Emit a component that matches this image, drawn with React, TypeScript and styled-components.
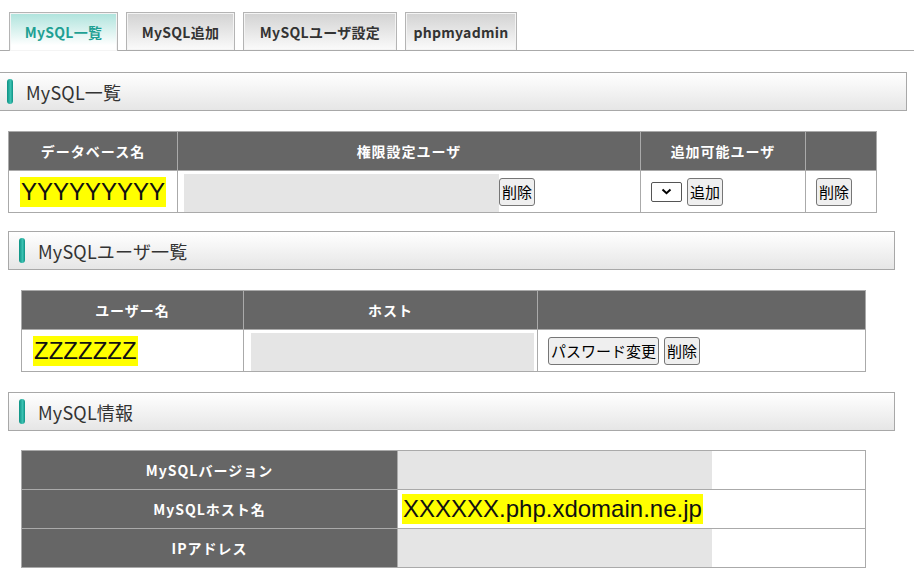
import React, { FC } from "react";
import styled, { createGlobalStyle, css } from "styled-components";

const GlobalStyle = createGlobalStyle`
  body {
    margin: 0;
    background: #fff;
    font-family: "Noto Sans CJK JP", "Noto Sans", sans-serif;
    color: #333;
  }
`;

const Page = styled.div`
  width: 914px;
  overflow: hidden;
  padding-bottom: 20px;
`;

const TabBar = styled.div`
  display: flex;
  align-items: flex-end;
  gap: 8px;
  height: 51px;
  padding-left: 9px;
  border-bottom: 1px solid #aaa;
  box-sizing: border-box;
`;

const Tab = styled.div<{ $active?: boolean; $w: number }>`
  width: ${(p) => p.$w}px;
  height: 38px;
  box-sizing: border-box;
  display: flex;
  align-items: center;
  justify-content: center;
  border: 1px solid #b4b4b4;
  border-bottom: none;
  font-size: 14px;
  font-weight: bold;
  letter-spacing: 0.3px;
  color: #333;
  background: linear-gradient(#d2d2d2, #fbfbfb);
  box-shadow: inset 0 0 0 1px #f4f4f4;
  ${(p) =>
    p.$active &&
    css`
      height: 39px;
      margin-bottom: -1px;
      color: #1ea093;
      background: linear-gradient(#aee3dc, #ffffff 85%);
    `}
`;

const SectionHead = styled.div<{ $first?: boolean; $top?: number }>`
  margin: ${(p) => (p.$first ? "21px 7px 0 -4px" : `${p.$top ?? 18}px 19px 0 8px`)};
  height: 39px;
  box-sizing: border-box;
  border: 1px solid #a8a8a8;
  background: linear-gradient(#ffffff, #e6e6e6);
  display: flex;
  align-items: center;
  padding-left: 10px;
  font-size: 18px;
  letter-spacing: 0.2px;
  color: #333;
`;

const Marker = styled.span`
  width: 6px;
  height: 25px;
  border-radius: 3px;
  background: linear-gradient(90deg, #0d9183, #3cc2b3 60%, #0d9183);
  margin-right: 13px;
`;

const Table = styled.table<{ $left: number; $w: number; $top: number }>`
  margin: ${(p) => p.$top}px 0 0 ${(p) => p.$left}px;
  width: ${(p) => p.$w}px;
  border-collapse: collapse;
  border: 1px solid #aaa;
  table-layout: fixed;
`;

const Th = styled.th`
  height: 38px;
  padding: 0;
  background: #666;
  color: #fff;
  font-size: 14px;
  font-weight: bold;
  letter-spacing: 1px;
  border: 1px solid #aaa;
  text-align: center;
`;

const Td = styled.td<{ $h?: number }>`
  height: ${(p) => p.$h ?? 41}px;
  padding: 0;
  border: 1px solid #aaa;
  vertical-align: middle;
`;

const CellRow = styled.div<{ $pad: number; $gap?: number }>`
  display: flex;
  align-items: center;
  gap: ${(p) => p.$gap ?? 5}px;
  padding-left: ${(p) => p.$pad}px;
`;

const FillRow = styled.div<{ $pad: number; $top: number }>`
  display: flex;
  align-items: flex-start;
  height: 100%;
  padding: ${(p) => p.$top}px 0 0 ${(p) => p.$pad}px;
  box-sizing: border-box;
`;

const GrayBox = styled.div<{ $w: number; $h: number }>`
  width: ${(p) => p.$w}px;
  height: ${(p) => p.$h}px;
  background: #e5e5e5;
  flex-shrink: 0;
`;

const Mark = styled.span`
  font-family: "Liberation Sans", Arial, sans-serif;
  font-size: 24px;
  line-height: 30px;
  background: #ffff00;
  color: #111;
  padding: 0 1px;
`;

const Button = styled.button<{ $mt?: number }>`
  font-family: "Noto Sans CJK JP", sans-serif;
  font-size: 15px;
  height: 28px;
  line-height: 24px;
  padding: 0 2px;
  margin-top: ${(p) => p.$mt ?? 0}px;
  border: 1px solid #767676;
  border-radius: 3px;
  background: #efefef;
  color: #000;
  flex-shrink: 0;
`;

const SelectBox = styled.span`
  width: 31px;
  height: 20px;
  box-sizing: border-box;
  border: 1px solid #555;
  border-radius: 2px;
  background: #fff;
  display: flex;
  align-items: center;
  justify-content: center;
`;

const Chevron: FC = () => (
  <svg width="11" height="7" viewBox="0 0 11 7">
    <path d="M1.5 1.5 L5.5 5.2 L9.5 1.5" fill="none" stroke="#000" strokeWidth="2" />
  </svg>
);

const App: FC = () => {
  return (
    <Page>
      <GlobalStyle />
      <TabBar>
        <Tab $active $w={109}>MySQL一覧</Tab>
        <Tab $w={109}>MySQL追加</Tab>
        <Tab $w={154}>MySQLユーザ設定</Tab>
        <Tab $w={112}>phpmyadmin</Tab>
      </TabBar>

      <SectionHead $first>
        <Marker />
        MySQL一覧
      </SectionHead>
      <Table $left={8} $w={869} $top={20}>
        <colgroup>
          <col style={{ width: 169 }} />
          <col style={{ width: 463 }} />
          <col style={{ width: 165 }} />
          <col />
        </colgroup>
        <thead>
          <tr>
            <Th>データベース名</Th>
            <Th>権限設定ユーザ</Th>
            <Th>追加可能ユーザ</Th>
            <Th />
          </tr>
        </thead>
        <tbody>
          <tr>
            <Td>
              <CellRow $pad={11}>
                <Mark>YYYYYYYYY</Mark>
              </CellRow>
            </Td>
            <Td>
              <FillRow $pad={6} $top={3}>
                <GrayBox $w={315} $h={38} />
                <Button $mt={4}>削除</Button>
              </FillRow>
            </Td>
            <Td>
              <CellRow $pad={10}>
                <SelectBox>
                  <Chevron />
                </SelectBox>
                <Button>追加</Button>
              </CellRow>
            </Td>
            <Td>
              <CellRow $pad={10}>
                <Button>削除</Button>
              </CellRow>
            </Td>
          </tr>
        </tbody>
      </Table>

      <SectionHead>
        <Marker />
        MySQLユーザ一覧
      </SectionHead>
      <Table $left={21} $w={845} $top={20}>
        <colgroup>
          <col style={{ width: 222 }} />
          <col style={{ width: 294 }} />
          <col />
        </colgroup>
        <thead>
          <tr>
            <Th>ユーザー名</Th>
            <Th>ホスト</Th>
            <Th />
          </tr>
        </thead>
        <tbody>
          <tr>
            <Td>
              <CellRow $pad={11}>
                <Mark>ZZZZZZZ</Mark>
              </CellRow>
            </Td>
            <Td>
              <FillRow $pad={7} $top={3}>
                <GrayBox $w={283} $h={38} />
              </FillRow>
            </Td>
            <Td>
              <CellRow $pad={10} $gap={5}>
                <Button>パスワード変更</Button>
                <Button>削除</Button>
              </CellRow>
            </Td>
          </tr>
        </tbody>
      </Table>

      <SectionHead $top={20}>
        <Marker />
        MySQL情報
      </SectionHead>
      <Table $left={21} $w={845} $top={19}>
        <colgroup>
          <col style={{ width: 376 }} />
          <col />
        </colgroup>
        <tbody>
          <tr>
            <Th>MySQLバージョン</Th>
            <Td $h={38}>
              <FillRow $pad={0} $top={0}>
                <GrayBox $w={314} $h={38} />
              </FillRow>
            </Td>
          </tr>
          <tr>
            <Th>MySQLホスト名</Th>
            <Td $h={38}>
              <CellRow $pad={4}>
                <Mark>XXXXXX.php.xdomain.ne.jp</Mark>
              </CellRow>
            </Td>
          </tr>
          <tr>
            <Th>IPアドレス</Th>
            <Td $h={38}>
              <FillRow $pad={0} $top={0}>
                <GrayBox $w={314} $h={38} />
              </FillRow>
            </Td>
          </tr>
        </tbody>
      </Table>
    </Page>
  );
};

export default App;
